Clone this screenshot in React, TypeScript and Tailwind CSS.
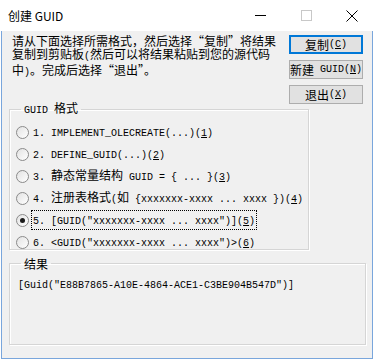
import React from 'react'

const cjkRe = /([\u2018-\u201d\u3000-\u9fff\uff00-\uffef]+)/

// SimSun-like mix: CJK full width at 12px, ASCII half width (6px) in mono
function Mixed({ text }: { text: string }) {
  const parts = text.split(cjkRe).filter(p => p !== '')
  return (
    <>
      {parts.map((p, i) =>
        cjkRe.test(p) ? (
          <span key={i} className="font-['Noto_Sans_CJK_SC',sans-serif] text-[12px]">{p}</span>
        ) : (
          <span key={i} className="font-['Liberation_Mono',monospace] text-[10px] whitespace-pre">{p}</span>
        )
      )}
    </>
  )
}

function Label({ pre, key1, post }: { pre: string; key1: string; post: string }) {
  return (
    <>
      <Mixed text={pre} />
      <span className="font-['Liberation_Mono',monospace] text-[10px] underline underline-offset-[1px]">{key1}</span>
      <Mixed text={post} />
    </>
  )
}

const items = [
  { pre: '1. IMPLEMENT_OLECREATE(...)(', k: '1', post: ')' },
  { pre: '2. DEFINE_GUID(...)(', k: '2', post: ')' },
  { pre: '3. 静态常量结构 GUID = { ... }(', k: '3', post: ')' },
  { pre: '4. 注册表格式(如 {xxxxxxx-xxxx ... xxxx })(', k: '4', post: ')' },
  { pre: '5. [GUID("xxxxxxx-xxxx ... xxxx")](', k: '5', post: ')' },
  { pre: '6. <GUID("xxxxxxx-xxxx ... xxxx")>(', k: '6', post: ')' },
]

function Radio({ checked }: { checked?: boolean }) {
  return (
    <span className="w-[13px] h-[13px] rounded-full border border-[#8a8a8a] bg-gradient-to-br from-[#e2e2e2] to-white flex items-center justify-center shrink-0">
      {checked && <span className="w-[5px] h-[5px] rounded-full bg-[#1b1b1b]" />}
    </span>
  )
}

function Btn({ pre, k, post, def }: { pre: string; k: string; post: string; def?: boolean }) {
  return (
    <button
      className={
        'w-[74px] h-[20px] bg-[#e1e1e1] flex items-center justify-center whitespace-nowrap leading-[14px] ' +
        (def ? 'border-2 border-[#0078d7]' : 'border border-[#adadad]')
      }>
      <Label pre={pre} key1={k} post={post} />
    </button>
  )
}

export default function App() {
  return (
    <div className="w-[375px] h-[361px] bg-white flex flex-col text-black">
      {/* title bar */}
      <div className="h-[31px] flex items-center pl-[8px] shrink-0">
        <span className="font-['Noto_Sans_CJK_SC',sans-serif] text-[12px] flex-1">创建 GUID</span>
        <div className="flex items-center h-full">
          <div className="w-[46px] h-full flex items-center justify-center">
            <span className="w-[11px] h-[1px] bg-black" />
          </div>
          <div className="w-[46px] h-full flex items-center justify-center">
            <span className="w-[11px] h-[11px] border border-[#c8c8c8]" />
          </div>
          <div className="w-[46px] h-full flex items-center justify-center">
            <svg width="12" height="12" viewBox="0 0 12 12">
              <path d="M0.5 0.5L11.5 11.5M11.5 0.5L0.5 11.5" stroke="#000" strokeWidth="1" />
            </svg>
          </div>
        </div>
      </div>

      {/* body */}
      <div className="ml-[1px] w-[372px] h-[328px] bg-[#f0f0f0] border-x border-b border-[#79a6dc] flex flex-col">
        <div className="flex h-[73px] pt-[4px] pl-[10px] pr-[9px]">
          <div className="w-[270px] leading-[13px] font-['Noto_Sans_CJK_SC',sans-serif] text-[12px] -mt-[1px]">
            <div><Mixed text="请从下面选择所需格式，然后选择“复制”将结果" /></div>
            <div><Mixed text="复制到剪贴板(然后可以将结果粘贴到您的源代码" /></div>
            <div><Mixed text="中)。完成后选择“退出”。" /></div>
          </div>
          <div className="ml-auto flex flex-col gap-[6px]">
            <Btn pre="复制(" k="C" post=")" def />
            <Btn pre="新建 GUID(" k="N" post=")" />
            <Btn pre="退出(" k="X" post=")" />
          </div>
        </div>

        <fieldset className="ml-[7px] w-[300px] h-[149px] border border-[#d5d5d5] shadow-[inset_1px_1px_0_#fff,1px_1px_0_#fff] mt-[-3px]">
          <legend className="ml-[11px] px-[3px] leading-[12px]">
            <Mixed text="GUID 格式" />
          </legend>
          <div className="mt-[4px] pl-[6px] flex flex-col">
            {items.map((it, i) => (
              <div key={i} className="h-[22px] flex items-center gap-[3px] whitespace-nowrap">
                <Radio checked={i === 4} />
                <span className={'leading-[14px] px-[1px] ' + (i === 4 ? 'outline outline-1 outline-dotted outline-black' : '')}>
                  <Label pre={it.pre} key1={it.k} post={it.post} />
                </span>
              </div>
            ))}
          </div>
        </fieldset>

        <fieldset className="ml-[7px] mt-[7px] w-[357px] h-[88px] border border-[#d5d5d5] shadow-[inset_1px_1px_0_#fff,1px_1px_0_#fff]">
          <legend className="ml-[11px] px-[3px] leading-[12px]">
            <Mixed text="结果" />
          </legend>
          <div className="mt-[6px] pl-[8px] leading-[12px]">
            <Mixed text={'[Guid("E88B7865-A10E-4864-ACE1-C3BE904B547D")]'} />
          </div>
        </fieldset>
      </div>
    </div>
  )
}
